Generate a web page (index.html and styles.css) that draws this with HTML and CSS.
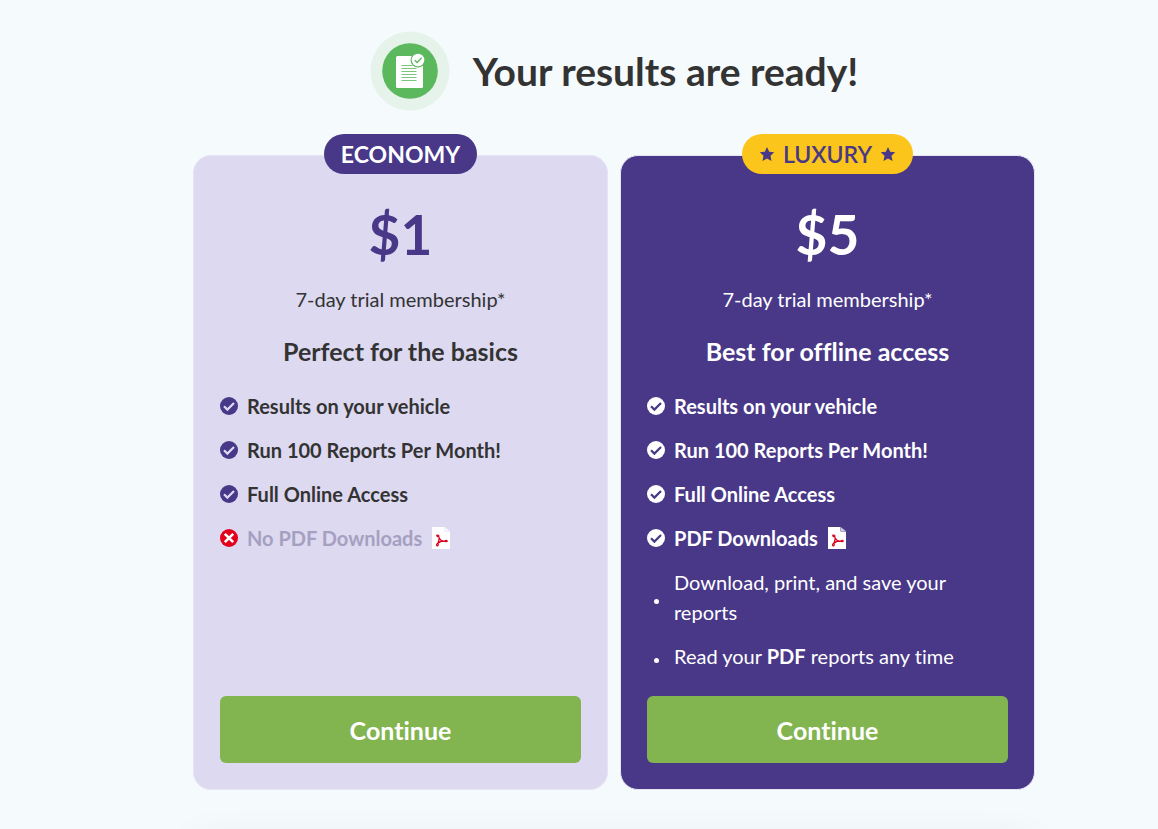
FILE: index.html
```
<!DOCTYPE html>
<html lang="en">
<head>
  <meta charset="utf-8">
  <meta name="viewport" content="width=device-width, initial-scale=1">
  <title>Your results are ready!</title>
  <link rel="stylesheet" href="styles.css">
</head>
<body>
  <!-- shared icons -->
  <svg class="sprite" aria-hidden="true">
    <symbol id="icon-check" viewBox="0 0 18 18">
      <circle cx="9" cy="9" r="9" fill="currentColor"/>
      <path class="mark" d="M4 9.200l3.400 3.400 6.600-6.600" fill="none" stroke-width="2.200"/>
    </symbol>
    <symbol id="icon-cross" viewBox="0 0 18 18">
      <circle cx="9" cy="9" r="9" fill="#e2001a"/>
      <path d="M4.800 4.800l8.400 8.400M13.200 4.800l-8.400 8.400" fill="none" stroke="#fff" stroke-width="2.600"/>
    </symbol>
    <symbol id="icon-star" viewBox="0 0 16 16">
      <path d="M8 1l2.200 4.700 5 .6-3.700 3.500 1 5.200L8 12.500 3.500 15l1-5.200L.8 6.300l5-.6z" fill="currentColor"/>
    </symbol>
    <symbol id="icon-pdf" viewBox="0 0 18 22">
      <path d="M0 0h12.500v4.500H18V22H0z" fill="#fff"/>
      <path d="M13 .3L17.700 4H13z" fill="#fff" opacity=".75"/>
      <path d="M5.700 8.200c-1.200-.5-1.300.7-.3 1.400 1.100.3 2-.3 1.200-1.100-.3-.3-.6-.4-.9-.3zM6.600 9.300c.5 1.700 1.300 3 2.600 4.200M7.200 10.500c0 2-.5 4.200-1.500 6M5.800 16.400c-1.700.4-1.600 2.300-.6 2.400 1.100 0 1.400-1.300.6-2.400zM6.300 16c1.200-1.200 3.200-2.100 7-2.100M9.200 13.500c1.300.6 2.600.9 4.100 1M13.300 13.600c1.300-.6 2 0 2 .5 0 .7-1 .8-2 .4z" fill="none" stroke="#d6001c" stroke-width="1.200"/>
    </symbol>
  </svg>

  <main class="page">
    <header class="results-header">
      <svg class="results-icon" viewBox="0 0 80 80" aria-hidden="true">
        <circle cx="40" cy="40" r="39.500" fill="#e5f3ea"/>
        <circle cx="40" cy="40" r="27.800" fill="#5cb85c"/>
        <rect x="26" y="25" width="27" height="32" rx="1.500" fill="#fff"/>
        <path d="M31.500 34.500h11M31.500 37.500h15M31.500 40.500h15M31.500 43.500h15M31.500 46.500h15M31.500 49.500h15" stroke="#5cb85c" stroke-width="1" opacity=".8"/>
        <circle cx="48" cy="29" r="7.500" fill="#5cb85c"/>
        <circle cx="48" cy="29" r="6.300" fill="#fff"/>
        <path d="M44.800 29.300l2.300 2.300 4.500-4.900" fill="none" stroke="#5cb85c" stroke-width="1.400"/>
      </svg>
      <h1>Your results are ready!</h1>
    </header>

    <div class="plans">
      <section class="plan economy">
        <div class="badge">ECONOMY</div>
        <div class="price">$1</div>
        <p class="trial">7-day trial membership*</p>
        <h2>Perfect for the basics</h2>
        <ul class="features">
          <li><svg class="icon"><use href="#icon-check"/></svg>Results on your vehicle</li>
          <li><svg class="icon"><use href="#icon-check"/></svg>Run 100 Reports Per Month!</li>
          <li><svg class="icon"><use href="#icon-check"/></svg>Full Online Access</li>
          <li class="disabled"><svg class="icon"><use href="#icon-cross"/></svg>No PDF Downloads<svg class="pdf"><use href="#icon-pdf"/></svg></li>
        </ul>
        <button type="button" class="continue">Continue</button>
      </section>

      <section class="plan luxury">
        <div class="badge">
          <svg class="star"><use href="#icon-star"/></svg>
          LUXURY
          <svg class="star"><use href="#icon-star"/></svg>
        </div>
        <div class="price">$5</div>
        <p class="trial">7-day trial membership*</p>
        <h2>Best for offline access</h2>
        <ul class="features">
          <li><svg class="icon"><use href="#icon-check"/></svg>Results on your vehicle</li>
          <li><svg class="icon"><use href="#icon-check"/></svg>Run 100 Reports Per Month!</li>
          <li><svg class="icon"><use href="#icon-check"/></svg>Full Online Access</li>
          <li><svg class="icon"><use href="#icon-check"/></svg>PDF Downloads<svg class="pdf"><use href="#icon-pdf"/></svg></li>
        </ul>
        <ul class="details">
          <li><span>Download, print, and save your reports</span></li>
          <li><span>Read your <b>PDF</b> reports any time</span></li>
        </ul>
        <button type="button" class="continue">Continue</button>
      </section>
    </div>

    <div class="next-panel"></div>
  </main>
</body>
</html>
```
FILE: styles.css
```
* {
  box-sizing: border-box;
}

body {
  margin: 0;
  background-color: #f5fafd;
  color: #333;
  font-family: Lato, "Liberation Sans", sans-serif;
  font-size: 20px;
  font-variant-ligatures: none;
  line-height: 30px;
}

h1, h2, p, ul {
  margin: 0;
  padding: 0;
}

ul {
  list-style: none;
}

.sprite {
  position: absolute;
  width: 0;
  height: 0;
}

.page {
  padding: 31px 0 0 70px;
  overflow: hidden;
}

.results-header {
  display: flex;
  justify-content: center;
  align-items: center;
  gap: 23px;
}

.results-icon {
  width: 80px;
  height: 80px;
}

h1 {
  font-size: 39px;
  font-weight: 700;
  line-height: 48px;
}

.plans {
  display: grid;
  grid-template-columns: 1fr 1fr;
  gap: 12px;
  max-width: 842px;
  margin: 44px auto 0;
}

.plan {
  --accent: #483887;
  --mark: #ddd9f1;
  display: flex;
  flex-direction: column;
  align-items: center;
  position: relative;
  padding: 46px 26px 26px;
  border: 1px solid #e6e3f3;
  border-radius: 18px;
}

.economy {
  background-color: #ddd9f1;
}

.luxury {
  --accent: #fff;
  --mark: #483887;
  background-color: #483887;
  color: #fff;
}

/* sits over the top edge of the card */
.badge {
  position: absolute;
  top: -22px;
  display: flex;
  align-items: center;
  gap: 8px;
  height: 40px;
  padding: 0 17px;
  border-radius: 20px;
  background-color: #483887;
  color: #fff;
  font-size: 23px;
  font-weight: 700;
  white-space: nowrap;
}

.luxury .badge {
  background-color: #fbc51b;
  color: #483887;
  font-weight: 600;
}

.star {
  width: 16px;
  height: 16px;
}

.price {
  color: var(--accent);
  font-size: 55px;
  font-weight: 700;
  line-height: 64px;
}

.trial {
  margin-top: 18px;
}

h2 {
  margin-top: 20px;
  font-size: 25px;
  font-weight: 700;
  line-height: 34px;
}

.features {
  width: 100%;
  margin-top: 23px;
  font-weight: 700;
}

.features li {
  display: flex;
  align-items: center;
  margin-bottom: 14px;
}

.icon {
  flex: none;
  width: 18px;
  height: 18px;
  margin-right: 9px;
  color: var(--accent);
}

.mark {
  stroke: var(--mark);
}

.pdf {
  flex: none;
  width: 18px;
  height: 22px;
  margin-left: 10px;
}

.disabled {
  color: #a5a0c0;
}

.details {
  width: 100%;
  margin-bottom: 25px;
}

.details li {
  display: flex;
  align-items: center;
  padding-right: 40px;
}

.details li + li {
  margin-top: 14px;
}

.details li::before {
  content: "";
  flex: none;
  width: 5px;
  height: 5px;
  margin: 9px 15px 0 7px;
  border-radius: 50%;
  background-color: #fff;
}

.continue {
  width: 100%;
  height: 67px;
  margin-top: auto;
  border: 0;
  border-radius: 6px;
  background-color: #82b44f;
  color: #fff;
  font-family: inherit;
  font-size: 25px;
  font-variant-ligatures: none;
  font-weight: 700;
  cursor: pointer;
}

.continue:hover {
  background-color: #74a443;
}

.next-panel {
  max-width: 842px;
  height: 40px;
  margin: 50px auto 0;
  background-color: #fff;
  box-shadow: 0 0 40px rgba(0, 0, 0, .06);
}
```
